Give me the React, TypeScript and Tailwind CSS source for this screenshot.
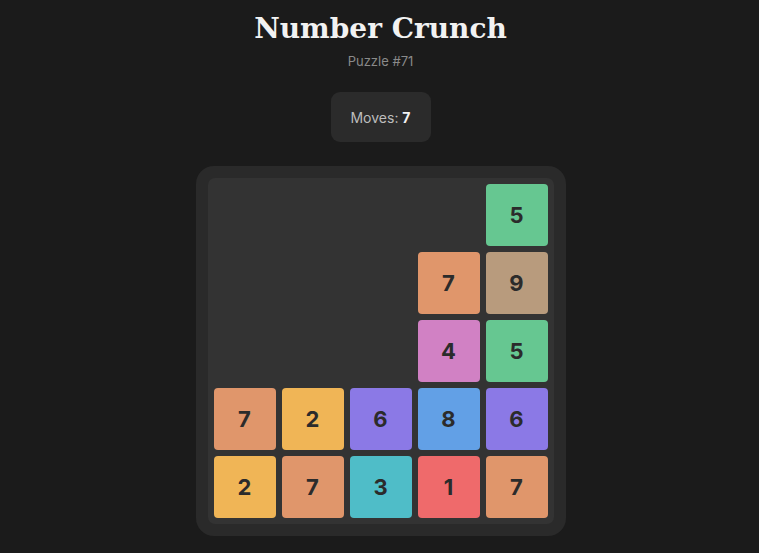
import React from "react";

const COLORS: Record<number, string> = {
  1: "bg-[#ef6a6b]",
  2: "bg-[#f0b556]",
  3: "bg-[#4fbdc8]",
  4: "bg-[#d181c4]",
  5: "bg-[#66c791]",
  6: "bg-[#8b79e6]",
  7: "bg-[#e0966b]",
  8: "bg-[#62a0e6]",
  9: "bg-[#b89b7d]",
};

const grid: (number | null)[][] = [
  [null, null, null, null, 5],
  [null, null, null, 7, 9],
  [null, null, null, 4, 5],
  [7, 2, 6, 8, 6],
  [2, 7, 3, 1, 7],
];

export default function App() {
  return (
    <div
      className="min-h-[553px] w-full bg-[#1b1b1b] flex flex-col items-center pt-[10px] pl-[2px]"
      style={{ fontFamily: "Inter, 'Noto Sans', sans-serif" }}
    >
      <h1
        className="text-[28px] leading-[38px] font-bold text-[#f2f2f2]"
        style={{ fontFamily: "'DejaVu Serif', serif" }}
      >
        Number Crunch
      </h1>
      <div className="text-[13px] leading-[18px] text-[#8a8a8a] mt-[4px]">Puzzle #71</div>
      <div className="mt-[22px] w-[100px] h-[50px] rounded-[9px] bg-[#2b2b2b] flex items-center justify-center text-[14px] text-[#bdbdbd]">
        Moves:&nbsp;<span className="font-bold text-[#f2f2f2]">7</span>
      </div>
      <div className="mt-[24px] w-[370px] h-[370px] rounded-[18px] bg-[#2a2a2a] p-[12px]">
        <div className="w-full h-full rounded-[7px] bg-[#333333] p-[6px] grid grid-cols-5 grid-rows-5 gap-[6px]">
          {grid.flatMap((row, r) =>
            row.map((v, c) =>
              v === null ? (
                <div key={`${r}-${c}`} />
              ) : (
                <div
                  key={`${r}-${c}`}
                  className={`${COLORS[v]} rounded-[4px] flex items-center justify-center text-[22px] font-bold text-[#2b2b2b]`}
                >
                  {v}
                </div>
              )
            )
          )}
        </div>
      </div>
    </div>
  );
}
